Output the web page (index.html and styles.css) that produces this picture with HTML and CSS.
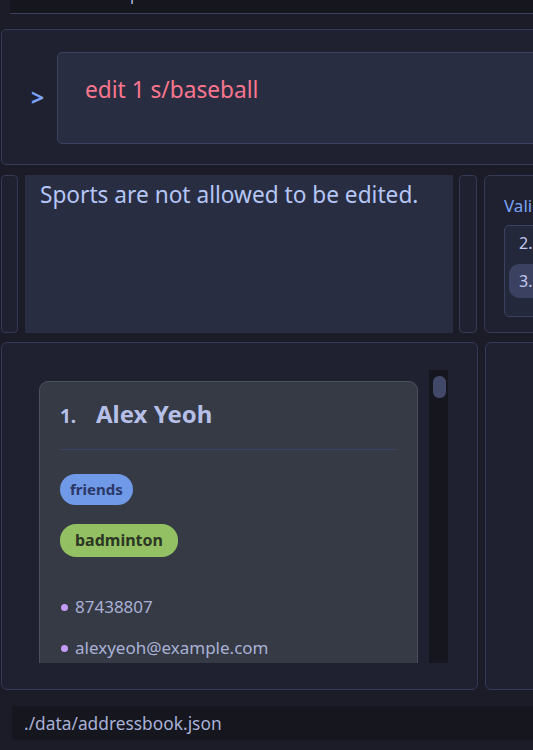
FILE: index.html
```html
<!DOCTYPE html>
<html>
<head>
<meta charset="utf-8">
<link rel="stylesheet" href="styles.css">
</head>
<body>
<div class="app">
  <div class="menubar">
    <span class="menu-item menu-file">File</span>
    <span class="menu-item menu-help">Help</span>
  </div>

  <div class="command">
    <span class="prompt">&gt;</span>
    <div class="command-input">edit 1 s/baseball</div>
  </div>

  <div class="row row-result">
    <div class="left-col result-col">
      <div class="edge-box"></div>
      <div class="result-text">Sports are not allowed to be edited.</div>
      <div class="edge-box scroll-box"></div>
    </div>
    <div class="right-panel valid-panel">
      <div class="valid-title">Valid sports</div>
      <div class="valid-list">
        <div class="valid-item">2.</div>
        <div class="valid-item selected">3.</div>
      </div>
    </div>
  </div>

  <div class="row row-list">
    <div class="left-col list-panel">
      <div class="list-viewport">
        <div class="list-content">
          <div class="card">
            <div class="card-title"><span class="card-index">1.</span><span class="card-name">Alex Yeoh</span></div>
            <div class="divider"></div>
            <div class="tags">
              <span class="tag tag-blue">friends</span>
              <span class="tag tag-green">badminton</span>
            </div>
            <ul class="details">
              <li>87438807</li>
              <li>alexyeoh@example.com</li>
            </ul>
          </div>
        </div>
        <div class="scrollbar"><div class="thumb"></div></div>
      </div>
    </div>
    <div class="right-panel"></div>
  </div>

  <div class="status">./data/addressbook.json</div>
</div>
</body>
</html>
```
FILE: styles.css
```css
html, body {
  margin: 0;
  padding: 0;
  background: #1b1c28;
  overflow: hidden;
  width: 533px;
  height: 750px;
}

.app {
  width: 800px;
  font-family: "Noto Sans", "Open Sans", sans-serif;
  color: #a9b1d6;
}

.menubar {
  margin-left: 10px;
  height: 13px;
  background: #16161e;
  border-bottom: 1px solid #3b4261;
  overflow: hidden;
  display: flex;
  align-items: flex-end;
  font-size: 14px;
  color: #c0caf5;
}

.menu-item {
  line-height: 14px;
  transform: translateY(-11px);
}

.menu-file { margin-left: 40px; }
.menu-help { margin-left: 36px; }

.command {
  margin-top: 15px;
  margin-left: 1px;
  height: 134px;
  border: 1px solid #343a55;
  border-radius: 5px;
  background: #1f2030;
  display: flex;
  align-items: center;
}

.prompt {
  color: #7aa2f7;
  font-size: 23px;
  font-weight: 700;
  width: 55px;
  padding-left: 29px;
  box-sizing: border-box;
  margin-top: 0;
}

.command-input {
  flex: 1;
  height: 92px;
  margin-top: 2px;
  background: #292d42;
  border: 1px solid #3b4261;
  border-radius: 5px;
  color: #f7768e;
  font-size: 22.67px;
  padding: 22px 0 0 27px;
  box-sizing: border-box;
  line-height: 30px;
}

.row {
  display: flex;
  gap: 7px;
  margin-top: 10px;
}

.left-col {
  width: 477px;
  box-sizing: border-box;
  margin-left: 1px;
}

.right-panel {
  flex: 1;
  border: 1px solid #343a55;
  border-radius: 6px;
  background: #1f2030;
}

.row-result {
  height: 158px;
}

.result-col {
  display: flex;
  gap: 7px;
}

.edge-box {
  width: 17px;
  border: 1px solid #343a55;
  border-radius: 4px;
  background: #1f2030;
  box-sizing: border-box;
}

.result-text {
  width: 428px;
  background: #292d42;
  color: #b4c6f5;
  font-size: 22.67px;
  line-height: 30px;
  padding: 5px 0 0 15px;
  box-sizing: border-box;
}

.scroll-box {
  width: 18px;
  margin-left: -1px;
}

.valid-panel {
  padding: 18px 0 0 19px;
}

.valid-title {
  color: #7aa2f7;
  font-size: 17px;
  line-height: 24px;
  white-space: nowrap;
}

.valid-list {
  margin-top: 7px;
  width: 300px;
  height: 92px;
  border: 1px solid #3b4261;
  border-radius: 5px;
  background: #24283b;
  padding: 4px 0 0 4px;
  box-sizing: border-box;
}

.valid-item {
  font-size: 16px;
  line-height: 28px;
  height: 34px;
  padding-left: 10px;
  color: #c0caf5;
  box-sizing: border-box;
}

.valid-item:first-child {
  height: 34px;
  line-height: 26px;
}

.valid-item.selected {
  background: #3b4261;
  border-radius: 10px;
  line-height: 34px;
}

.row-list {
  height: 348px;
  margin-top: 9px;
}

.list-panel {
  border: 1px solid #343a55;
  border-radius: 6px;
  background: #1f2030;
  padding: 27px 0 0 26px;
}

.list-viewport {
  display: flex;
  height: 293px;
}

.list-content {
  width: 401px;
  overflow: hidden;
  padding: 11px 0 0 11px;
  box-sizing: border-box;
}

.card {
  width: 379px;
  height: 320px;
  background: #363a45;
  border: 1px solid #4a4f5c;
  border-radius: 9px;
  box-sizing: border-box;
  padding: 17px 20px 0 20px;
}

.card-title {
  font-size: 24px;
  font-weight: 700;
  line-height: 30px;
  color: #b5bfe8;
}

.card-index {
  font-size: 19px;
  display: inline-block;
  width: 36px;
}

.divider {
  margin-top: 18px;
  height: 1px;
  background: #3b4465;
}

.tags {
  display: flex;
  flex-direction: column;
  align-items: flex-start;
  gap: 19px;
  margin-top: 24px;
}

.tag {
  font-weight: 700;
  border-radius: 16px;
  box-sizing: border-box;
}

.tag-blue {
  background: #7099e8;
  color: #2b3766;
  font-size: 15px;
  height: 31px;
  line-height: 31px;
  padding: 0 10px;
}

.tag-green {
  background: #93c063;
  color: #2c3623;
  font-size: 16px;
  height: 33px;
  line-height: 33px;
  padding: 0 15px;
}

.details {
  list-style: none;
  margin: 38px 0 0 0;
  padding: 0;
}

.details li {
  font-size: 17px;
  line-height: 24px;
  height: 41px;
  color: #a9b1d6;
  display: flex;
  align-items: flex-start;
}

.details li::before {
  content: "";
  width: 7px;
  height: 7px;
  border-radius: 50%;
  background: #c49bf7;
  margin: 9px 7px 0 1px;
  flex: none;
}

.scrollbar {
  width: 19px;
  background: #16161e;
  padding: 6px 0 0 4px;
  box-sizing: border-box;
}

.thumb {
  width: 13px;
  height: 22px;
  border-radius: 6px;
  background: #414868;
}

.status {
  margin: 16px 0 0 12px;
  height: 34px;
  background: #16161e;
  border-radius: 4px;
  font-size: 17.33px;
  line-height: 34px;
  padding-left: 12px;
  color: #a9b1d6;
}
```
